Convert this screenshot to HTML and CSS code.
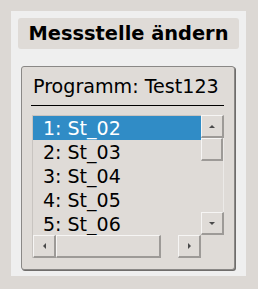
FILE: index.html
```html
<!DOCTYPE html>
<html lang="de">
<head>
    <meta charset="UTF-8">
    <title>Messstelle ändern</title>
    <link rel="stylesheet" href="styles.css">
</head>
<body>
    <div class="panel">
        <div class="title">Messstelle ändern</div>
        <div class="group">
            <div class="program">Programm: Test123</div>
            <div class="separator"></div>
            <div class="listbox">
                <div class="rows">
                    <div class="row selected">1: St_02</div>
                    <div class="row">2: St_03</div>
                    <div class="row">3: St_04</div>
                    <div class="row">4: St_05</div>
                    <div class="row">5: St_06</div>
                </div>
                <div class="vscroll">
                    <div class="sb-btn"><span class="arrow up"></span></div>
                    <div class="sb-thumb v"></div>
                    <div class="sb-trough"></div>
                    <div class="sb-btn"><span class="arrow down"></span></div>
                </div>
                <div class="hscroll">
                    <div class="sb-btn"><span class="arrow left"></span></div>
                    <div class="sb-thumb h"></div>
                    <div class="sb-trough"></div>
                    <div class="sb-btn"><span class="arrow right"></span></div>
                </div>
                <div class="corner"></div>
            </div>
        </div>
    </div>
</body>
</html>
```

FILE: styles.css
```css
body {
    margin: 0;
    background: #dcd8d4;
    font-family: 'DejaVu Sans', sans-serif;
    color: #000;
    width: 258px;
    height: 289px;
    overflow: hidden;
}

.panel {
    margin: 11px;
    width: 235px;
    height: 265px;
    box-sizing: border-box;
    padding: 7px;
    background: #efefef;
}

.title {
    height: 31px;
    width: 221px;
    line-height: 31px;
    background: #dfdbd7;
    border-radius: 3px;
    text-align: center;
    font-weight: bold;
    font-size: 19.4px;
}

.group {
    margin: 17px 0 0 3px;
    width: 214px;
    height: 204px;
    box-sizing: border-box;
    border: 1px solid #8a8886;
    border-radius: 3px;
    background: #dfdbd7;
    padding: 9px 10px 0 9px;
    box-shadow: 1px 1px 0 #6f6d6b;
}

.program {
    height: 22px;
    line-height: 22px;
    padding-left: 2px;
    font-size: 19.1px;
    white-space: nowrap;
}

.separator {
    margin-top: 7px;
    height: 1px;
    width: 193px;
    background: #000;
}

.listbox {
    margin: 9px 0 0 1px;
    width: 192px;
    display: grid;
    grid-template-columns: 169px 23px;
    grid-template-rows: 120px 23px;
}

.rows {
    border-left: 1px solid #c8c4c0;
    border-top: 1px solid #c8c4c0;
    overflow: hidden;
    background: #dfdbd7;
}

.row {
    height: 24px;
    line-height: 24px;
    padding-left: 10px;
    font-size: 19px;
    white-space: nowrap;
}

.row.selected {
    background: #308cc6;
    color: #fff;
}

.vscroll {
    display: flex;
    flex-direction: column;
    background: #dfdbd7;
    border-right: 1px solid #eceae8;
}

.hscroll {
    display: flex;
    background: #dfdbd7;
    border-left: 1px solid #c8c4c0;
}

.sb-btn,
.sb-thumb {
    box-sizing: border-box;
    background: #dfdbd7;
    border-top: 1px solid #f6f5f4;
    border-left: 1px solid #f6f5f4;
    border-right: 2px solid #9d9a97;
    border-bottom: 2px solid #9d9a97;
    display: flex;
    align-items: center;
    justify-content: center;
}

.vscroll .sb-btn {
    height: 23px;
    width: 23px;
}

.hscroll .sb-btn {
    width: 23px;
    height: 23px;
}

.sb-thumb.v {
    height: 23px;
}

.sb-thumb.h {
    width: 105px;
}

.sb-trough {
    flex: 1;
}

.corner {
    background: #dfdbd7;
}

.arrow {
    width: 0;
    height: 0;
    border: 3px solid transparent;
}

.arrow.up {
    border-bottom-color: #4a4a4a;
    border-top-width: 0;
}

.arrow.down {
    border-top-color: #4a4a4a;
    border-bottom-width: 0;
}

.arrow.left {
    border-right-color: #4a4a4a;
    border-left-width: 0;
}

.arrow.right {
    border-left-color: #4a4a4a;
    border-right-width: 0;
}
```
